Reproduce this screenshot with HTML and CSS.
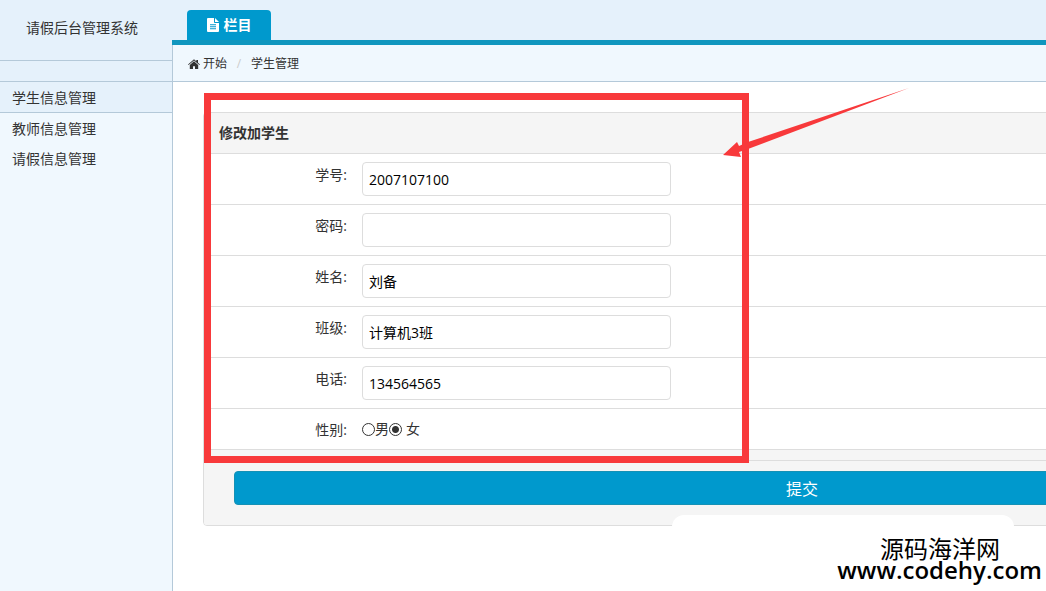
FILE: index.html
```html
<!DOCTYPE html>
<html lang="zh-CN">
<head>
    <meta charset="UTF-8">
    <meta name="viewport" content="width=device-width, initial-scale=1.0">
    <title>请假后台管理系统</title>
    <link rel="stylesheet" href="styles.css">
</head>
<body>
    <aside class="sidebar">
        <div class="brand">请假后台管理系统</div>
        <nav class="menu">
            <a href="#" class="active">学生信息管理</a>
            <a href="#">教师信息管理</a>
            <a href="#">请假信息管理</a>
        </nav>
    </aside>

    <main class="main">
        <header class="topbar">
            <a href="#" class="tab">
                <svg width="12" height="14" viewBox="0 0 12 14"><path fill="#fff" fill-rule="evenodd" d="M1 0h6v4.200q0 .8.8.8H12v8q0 1-1 1H1q-1 0-1-1V1q0-1 1-1zM8 0l4 4H8zM3 6.200v1h6v-1zM3 8.200v1h6v-1zM3 10.200v1h6v-1z"/></svg>
                <span>栏目</span>
            </a>
        </header>

        <div class="breadcrumb">
            <svg width="12" height="10" viewBox="0 0 12 10"><path fill="#333" d="M6 .2l2.300 2V1H10v2.700l2 1.700-.6.700L6 1.500.6 6.100 0 5.400zM6 2.300l4.200 3.600V10H7V7.200H5V10H1.800V5.900z"/></svg>
            <a href="#">开始</a>
            <span class="slash">/</span>
            <a href="#">学生管理</a>
        </div>

        <form class="panel" onsubmit="return false">
            <h1>修改加学生</h1>
            <div class="row">
                <label for="number">学号:</label>
                <input type="text" id="number" name="number" value="2007107100">
            </div>
            <div class="row">
                <label for="password">密码:</label>
                <input type="password" id="password" name="password">
            </div>
            <div class="row">
                <label for="name">姓名:</label>
                <input type="text" id="name" name="name" value="刘备">
            </div>
            <div class="row">
                <label for="class">班级:</label>
                <input type="text" id="class" name="class" value="计算机3班">
            </div>
            <div class="row">
                <label for="phone">电话:</label>
                <input type="text" id="phone" name="phone" value="134564565">
            </div>
            <div class="row">
                <span class="label">性别:</span>
                <div class="radios">
                    <input type="radio" id="male" name="sex"><label for="male">男</label>
                    <input type="radio" id="female" name="sex" checked><label for="female" class="spaced">女</label>
                </div>
            </div>
            <div class="spacer"></div>
            <div class="footer">
                <button type="submit">提交</button>
            </div>

            <!-- red frame and arrow over the form -->
            <div class="frame"></div>
            <svg class="arrow" width="186" height="70" viewBox="0 0 186 70"><path fill="#f8393b" d="M0 67L14 54l2 4L25 54 186 0 25 61l-9 3 2 5z"/></svg>
        </form>
    </main>

    <div class="watermark">
        <div class="site">源码海洋网</div>
        <div class="url">www.codehy.com</div>
    </div>
</body>
</html>
```
FILE: styles.css
```css
* {
    box-sizing: border-box;
}

body {
    margin: 0;
    min-height: 100vh;
    display: flex;
    position: relative;
    overflow: hidden;
    background: #fff;
    color: #333;
    font-family: "Open Sans", "Noto Sans CJK SC", sans-serif;
    font-size: 14px;
    line-height: 20px;
}

a {
    color: inherit;
    text-decoration: none;
}

/* Sidebar */
.sidebar {
    flex: 0 0 173px;
    background: #f0f8fe;
    border-right: 1px solid #b4c9d9;
}

.brand {
    height: 60px;
    padding: 18px 26px;
    background: #e5f1fb;
}

.menu {
    padding-top: 20px;
    border-top: 1px solid #b4c9d9;
    background: linear-gradient(#e5f1fb 20px, transparent 20px);
}

.menu a {
    display: block;
    padding: 5px 12px;
}

.menu .active {
    padding-bottom: 5px;
    padding-top: 6px;
    background: #e5f1fb;
    border-top: 1px solid #b4c9d9;
    box-shadow: inset 0 -1px #b4c9d9;
}

.menu .active + a {
    padding-top: 6px;
}

.main {
    flex: 1 0 1243px;
}

.topbar {
    height: 45px;
    margin-left: -1px;
    padding: 10px 15px 0;
    background: #e5f1fb;
    border-bottom: 5px solid #1096be;
}

.tab {
    display: flex;
    align-items: center;
    justify-content: center;
    gap: 5px;
    width: 84px;
    height: 30px;
    border-radius: 4px 4px 0 0;
    background: #0099cd;
    color: #fff;
    font-weight: bold;
}

.breadcrumb {
    display: flex;
    align-items: center;
    gap: 3px;
    height: 37px;
    padding: 2px 15px 0;
    background: #f0f8fe;
    border-bottom: 1px solid #b4c9d9;
    font-size: 12px;
}

.slash {
    width: 18px;
    text-align: center;
    color: #ccc;
}

/* Form */
.panel {
    position: relative;
    margin: 30px 15px 0 30px;
    border: 1px solid #ddd;
    border-radius: 4px;
}

.panel h1 {
    margin: 0;
    padding: 10px 15px;
    background: #f5f5f5;
    font-size: 14px;
    line-height: 20px;
}

.row {
    display: flex;
    padding: 8px 0;
    border-top: 1px solid #ddd;
}

.row > label,
.label {
    width: 143px;
    margin-right: 15px;
    padding-top: 3px;
    text-align: right;
}

.row > input {
    width: 309px;
    height: 34px;
    padding: 0 6px;
    border: 1px solid #ddd;
    border-radius: 4px;
    background: #fff;
    color: #000;
    font: inherit;
}

.radios {
    display: flex;
    align-items: center;
    height: 24px;
}

.radios input {
    appearance: none;
    width: 13px;
    height: 13px;
    margin: 0;
    border: 1px solid #333;
    border-radius: 50%;
    background: #fff;
}

.radios input:checked {
    background: radial-gradient(circle, #333 3px, #fff 4px);
}

.spaced {
    margin-left: 4px;
}

.spacer {
    height: 11px;
    border-top: 1px solid #ddd;
    background: #f5f5f5;
}

.footer {
    padding: 10px 30px 20px;
    background: #f5f5f5;
    border-top: 1px solid #ddd;
    border-radius: 0 0 3px 3px;
}

.footer button {
    display: block;
    width: 100%;
    height: 34px;
    border: 1px solid #1591b5;
    border-radius: 4px;
    background: #0099cd;
    color: #fff;
    font-family: inherit;
    font-size: 16px;
}

/* Annotation */
.frame {
    position: absolute;
    top: -20px;
    left: 0;
    width: 545px;
    height: 370px;
    border: 7px solid #f8393b;
    pointer-events: none;
}

.arrow {
    position: absolute;
    top: -25px;
    left: 519px;
    pointer-events: none;
}

/* Watermark */
.watermark {
    position: absolute;
    z-index: 1;
    right: 0;
    bottom: 0;
    width: 374px;
    height: 76px;
    padding: 22px 4px 0 0;
    color: #000;
    font-size: 24px;
    text-align: right;
}

.watermark::before {
    content: "";
    position: absolute;
    z-index: -1;
    top: 0;
    left: 0;
    width: 342px;
    height: 76px;
    border-radius: 12px 12px 0 0;
    background: #fff;
}

.site {
    padding-right: 42px;
    line-height: 24px;
}

.url {
    font-weight: 600;
    line-height: 18px;
}
```
